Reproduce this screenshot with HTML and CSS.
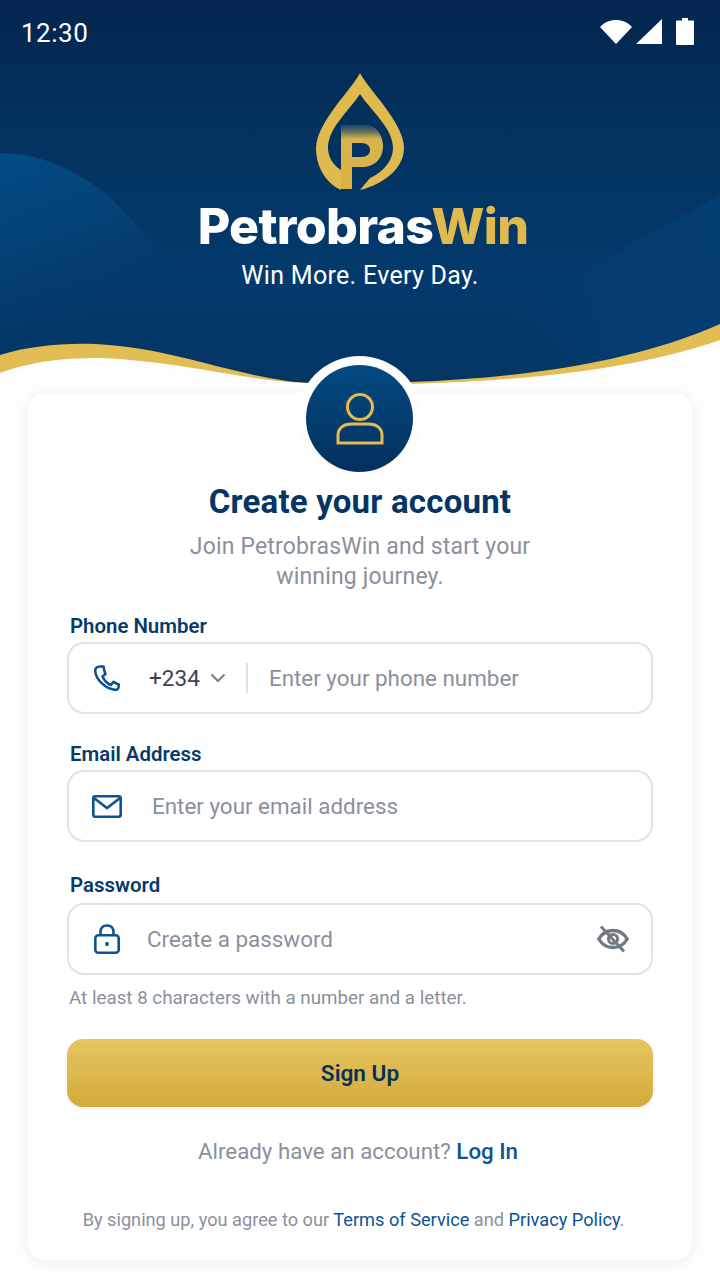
FILE: index.html
```html
<!DOCTYPE html>
<html lang="en">
<head>
<meta charset="utf-8">
<title>PetrobrasWin</title>
<link rel="stylesheet" href="styles.css">
</head>
<body>
<div class="page">
  <header class="hero">
    <svg class="hero-bg" viewBox="0 0 720 394" preserveAspectRatio="none" aria-hidden="true">
      <defs>
        <linearGradient id="bg" x1="0" y1="0" x2="0" y2="1">
          <stop offset="0" stop-color="#03264f"/>
          <stop offset=".35" stop-color="#03335f"/>
          <stop offset=".7" stop-color="#033a6d"/>
          <stop offset="1" stop-color="#033563"/>
        </linearGradient>
        <linearGradient id="hill" gradientUnits="userSpaceOnUse" x1="0" y1="153" x2="60" y2="330">
          <stop offset="0" stop-color="#034c85"/>
          <stop offset=".55" stop-color="#034275"/>
          <stop offset="1" stop-color="#033a6d" stop-opacity="0"/>
        </linearGradient>
        <linearGradient id="hillR" gradientUnits="userSpaceOnUse" x1="720" y1="260" x2="500" y2="300">
          <stop offset="0" stop-color="#033e72"/>
          <stop offset=".5" stop-color="#033d70"/>
          <stop offset="1" stop-color="#033a6c" stop-opacity="0"/>
        </linearGradient>
      </defs>
      <rect width="720" height="394" fill="url(#bg)"/>
      <path d="M0 153C40 153 75 170 105 193C130 215 150 240 175 275C195 305 215 330 240 350L0 370Z" fill="url(#hill)"/>
      <path d="M720 195L597 263C570 280 530 298 490 325L420 380L720 360Z" fill="url(#hillR)"/>
      <path d="M0 355C30 346 60 343 95 344C160 347 215 368 269 378C285 381 300 383 320 383L410 382C530 378 640 360 720 324V394H0Z" fill="#e2bd54"/>
      <path d="M0 373C30 362 60 358 100 358C160 360 215 373 269 380C300 384 340 385 410 384C530 381 640 368 720 340V394H0Z" fill="#fdfdfd"/>
    </svg>
    <div class="status">
      <span class="time">12:30</span>
      <span class="status-icons">
        <svg class="ic-wifi" viewBox="0 0 32 24"><path d="M0 7C4 2.500 10 0 16 0s12 2.500 16 7L16 24Z" fill="#fff"/></svg>
        <svg class="ic-signal" viewBox="0 0 26 25"><path d="M26 0V25H0Z" fill="#fff"/></svg>
        <svg class="ic-battery" viewBox="0 0 18 27"><path d="M6 0h6v2.500h5a1 1 0 0 1 1 1V26a1 1 0 0 1-1 1H1a1 1 0 0 1-1-1V3.500a1 1 0 0 1 1-1h5Z" fill="#fff"/></svg>
      </span>
    </div>
    <svg class="logo" viewBox="0 0 88 118" aria-hidden="true">
      <defs>
        <linearGradient id="pfade" x1="0" y1="0" x2="0" y2="1">
          <stop offset="0" stop-color="#1f4468"/>
          <stop offset=".1" stop-color="#5f6c5f"/>
          <stop offset=".22" stop-color="#d9b44e"/>
          <stop offset="1" stop-color="#dcb145"/>
        </linearGradient>
      </defs>
      <path d="M44 0C52 16 88 50 88 75C88 96 66 112 44 117L54 105C66 100 77 88 77 75C77 55 55 38 44 21C33 38 12 55 12 75C12 84 17 92 25 97V117C10 110 0 94 0 75C0 50 36 16 44 0Z" fill="#e0b94f"/>
      <path d="M25 52H50C60 52 67 62 67 73C67 86 58 94 46 94H36V84H45C51 84 54 81 54 77C54 73 51 70 45 70H36V116H25Z" fill="url(#pfade)"/>
    </svg>
    <div class="brand"><span class="brand-white">Petrobras</span><span class="brand-gold">Win</span></div>
    <p class="tagline">Win More. Every Day.</p>
  </header>

  <main class="card">
    <div class="avatar">
      <div class="avatar-inner">
        <svg viewBox="0 0 48 52" class="ic-person"><ellipse cx="24" cy="14" rx="12.500" ry="12.500" fill="none" stroke="#e2bb50" stroke-width="3"/><path d="M2 50V42C2 35 8 31 15 31H33C40 31 46 35 46 42V50Z" fill="none" stroke="#e2bb50" stroke-width="3"/></svg>
      </div>
    </div>
    <h1 class="title">Create your account</h1>
    <p class="sub">Join PetrobrasWin and start your<br>winning journey.</p>

    <label class="label">Phone Number</label>
    <div class="field">
      <svg class="ic ic-phone" viewBox="0 0 26 26"><path d="M6 1.500L9.500 1.500C10 5 10.500 7 11.500 9L8.500 11.500C10.500 16 13 18.500 17 20L19.500 16.800C21.500 18 23 18.800 24.800 19.500L24.500 22.500C24.200 24 22.800 25 21 24.800C11 23.500 2 14.500 1.200 6C1 3.500 3 1.500 6 1.500Z" fill="none" stroke="#0b5394" stroke-width="2.600" stroke-linejoin="round"/></svg>
      <span class="code">+234</span>
      <svg class="ic-chev" viewBox="0 0 16 10"><path d="M1.500 1.500L8 8L14.500 1.500" fill="none" stroke="#7b818c" stroke-width="2.200"/></svg>
      <span class="divider"></span>
      <span class="ph ph-phone">Enter your phone number</span>
    </div>

    <label class="label label-email">Email Address</label>
    <div class="field">
      <svg class="ic ic-mail" viewBox="0 0 30 23"><rect x="1.300" y="1.300" width="27.400" height="20.400" rx="2" fill="none" stroke="#0b5394" stroke-width="2.600"/><path d="M2 3L15 13L28 3" fill="none" stroke="#0b5394" stroke-width="2.600"/></svg>
      <span class="ph ph-email">Enter your email address</span>
    </div>

    <label class="label label-pass">Password</label>
    <div class="field">
      <svg class="ic ic-lock" viewBox="0 0 26 30"><rect x="1.300" y="11.300" width="23.400" height="17.400" rx="3" fill="none" stroke="#0b5394" stroke-width="2.600"/><path d="M6.500 11V8C6.500 4 9 1.500 13 1.500S19.500 4 19.500 8V11" fill="none" stroke="#0b5394" stroke-width="2.600"/><ellipse cx="13" cy="20" rx="1.800" ry="2.300" fill="#0b5394"/></svg>
      <span class="ph ph-pass">Create a password</span>
      <svg class="ic-eye" viewBox="0 0 32 28"><path d="M1.800 14C5 8.500 10 5.500 16 5.500S27 8.500 30.200 14C27 19.500 22 22.500 16 22.500S5 19.500 1.800 14Z" fill="none" stroke="#737983" stroke-width="3.400"/><circle cx="16" cy="14" r="4.600" fill="none" stroke="#737983" stroke-width="3"/><path d="M4 1.500L27 26.500" stroke="#737983" stroke-width="3"/></svg>
    </div>
    <p class="hint">At least 8 characters with a number and a letter.</p>

    <button class="cta">Sign Up</button>

    <p class="login">Already have an account? <a class="link-strong">Log In</a></p>
    <p class="terms">By signing up, you agree to our <a class="link">Terms of Service</a> and <a class="link">Privacy Policy</a>.</p>
  </main>
</div>
</body>
</html>
```

FILE: styles.css
```css
* { box-sizing: border-box; }
html, body { margin: 0; padding: 0; }
body { background: #fdfdfd; font-family: Roboto, "Liberation Sans", sans-serif; }
.page { width: 720px; height: 1280px; overflow: hidden; display: flex; flex-direction: column; }

.hero { position: relative; height: 393px; flex: none; display: flex; flex-direction: column; align-items: center; }
.hero-bg { position: absolute; inset: 0; width: 720px; height: 394px; }
.status { position: relative; width: 100%; height: 73px; flex: none; display: flex; justify-content: space-between; align-items: flex-start; padding: 18px 26px 0 21px; }
.time { color: #fff; font-size: 26px; line-height: 30px; letter-spacing: .5px; }
.status-icons { display: flex; align-items: flex-start; }
.status-icons svg { display: block; }
.ic-wifi { width: 32px; height: 24px; margin-top: 2px; margin-right: 4px; }
.ic-signal { width: 26px; height: 25px; margin-top: 1px; margin-right: 14px; }
.ic-battery { width: 18px; height: 27px; }
.logo { position: relative; width: 88px; height: 118px; flex: none; display: block; }
.brand { position: relative; margin-top: 8px; padding-left: 6px; font-family: Inter, sans-serif; font-weight: 800; font-size: 50px; line-height: 54px; letter-spacing: -.7px; white-space: nowrap; }
.brand-white { color: #fff; }
.brand-gold { color: #e0b94f; }
.tagline { position: relative; margin: 8px 0 0; color: #fff; font-size: 25px; line-height: 30px; letter-spacing: .3px; }

.card { position: relative; flex: none; width: 664px; height: 867px; margin-left: 28px; padding: 89px 39px 0; background: #fff; border-radius: 18px; box-shadow: 0 2px 14px rgba(20, 40, 70, .07); }
.avatar { position: absolute; left: 269px; top: -37px; width: 125px; height: 125px; border-radius: 50%; background: #fdfdfd; padding: 9px; }
.avatar-inner { width: 107px; height: 107px; border-radius: 50%; background: linear-gradient(#044a80, #03305e); display: flex; align-items: center; justify-content: center; }
.ic-person { width: 48px; height: 52px; display: block; }
.title { margin: 0; text-align: center; color: #053562; font-size: 33px; line-height: 40px; font-weight: 700; letter-spacing: .2px; }
.sub { margin: 10px 0 0; text-align: center; color: #8a909c; font-size: 23px; line-height: 30px; letter-spacing: .16px; }

.label { display: block; margin: 19px 0 0 3px; color: #063a6b; font-size: 20.4px; line-height: 30px; font-weight: 600; }
.label-email { margin-top: 25px; }
.label-pass { margin-top: 28px; }
.field { display: flex; align-items: center; height: 72px; margin-top: 1px; border: 2px solid #e0e2e8; border-radius: 17px; background: #fff; position: relative; }
.label-email + .field { margin-top: 1px; }
.label-pass + .field { margin-top: 3px; }
.ic { display: block; flex: none; }
.ic-phone { width: 26px; height: 26px; margin-left: 25px; }
.code { margin-left: 29px; color: #3d4450; font-size: 22.6px; }
.ic-chev { width: 16px; height: 10px; margin-left: 10px; flex: none; }
.divider { width: 2px; height: 30px; margin-left: 20px; background: #dfe1e6; flex: none; }
.ph { margin-left: 20px; color: #8a909c; font-size: 22.4px; white-space: nowrap; }
.ph-phone { margin-left: 21px; }
.ic-mail { width: 30px; height: 23px; margin-left: 23px; }
.ph-email { margin-left: 30px; }
.ic-lock { width: 26px; height: 30px; margin-left: 25px; }
.ph-pass { margin-left: 27px; }
.ic-eye { width: 32px; height: 28px; margin-left: auto; margin-right: 22px; flex: none; }
.hint { margin: 11px 0 0 2px; color: #8a909c; font-size: 18.8px; line-height: 24px; }
.cta { display: block; width: 100%; height: 68px; margin-top: 29px; border: 0; border-radius: 16px; background: linear-gradient(#e6c662, #d3aa3a); color: #07305c; font-family: inherit; font-size: 22.6px; font-weight: 600; box-shadow: 0 2px 4px rgba(0,0,0,.06); }
.login { margin: 28px 4px 0 0; text-align: center; color: #8a909c; font-size: 22.3px; line-height: 32px; }
.link-strong { color: #0b5394; font-weight: 500; }
.terms { margin: 41px 13px 0 0; text-align: center; color: #8a909c; font-size: 18.2px; line-height: 24px; white-space: nowrap; }
.link { color: #0b5394; }
```
